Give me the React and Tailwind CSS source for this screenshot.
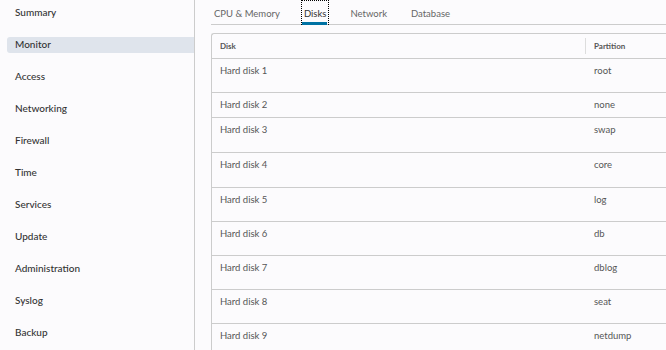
const navItems = [
  "Summary",
  "Monitor",
  "Access",
  "Networking",
  "Firewall",
  "Time",
  "Services",
  "Update",
  "Administration",
  "Syslog",
  "Backup",
];

const tabs = ["CPU & Memory", "Disks", "Network", "Database"];

// row heights include the bottom border
const disks = [
  { name: "Hard disk 1", partition: "root", h: "h-[34px]" },
  { name: "Hard disk 2", partition: "none", h: "h-[25px]" },
  { name: "Hard disk 3", partition: "swap", h: "h-[35px]" },
  { name: "Hard disk 4", partition: "core", h: "h-[35px]" },
  { name: "Hard disk 5", partition: "log", h: "h-[34px]" },
  { name: "Hard disk 6", partition: "db", h: "h-[34px]" },
  { name: "Hard disk 7", partition: "dblog", h: "h-[34px]" },
  { name: "Hard disk 8", partition: "seat", h: "h-[34px]" },
  { name: "Hard disk 9", partition: "netdump", h: "h-[34px]" },
];

function Sidebar() {
  return (
    <div className="w-[195px] shrink-0 border-r border-[#cccccc] flex flex-col gap-4 pt-[5px]">
      {navItems.map((item) =>
        item === "Monitor" ? (
          <div
            key={item}
            className="ml-[7px] h-4 leading-[15px] pl-2 rounded-l-[3px] bg-[#dfe4ec] text-[#333333] text-[10px] font-medium"
          >
            {item}
          </div>
        ) : (
          <div key={item} className="h-4 leading-[15px] pl-[15px] text-[#333333] text-[10px] font-medium">
            {item}
          </div>
        )
      )}
    </div>
  );
}

function Tabs() {
  return (
    <div className="h-[25px] border-b border-[#cccccc] flex gap-[18px] items-start">
      {tabs.map((tab) =>
        tab === "Disks" ? (
          <div
            key={tab}
            className="relative h-[25px] px-[3px] flex flex-col outline-1 outline-dotted outline-black -outline-offset-1"
          >
            <span className="pt-[8px] leading-[12px] text-[9.5px] text-[#333333]">{tab}</span>
            <span className="absolute left-px right-[2px] top-[22px] h-[3px] bg-[#0072a3]" />
          </div>
        ) : (
          <div key={tab} className="h-[25px] px-[3px]">
            <span className="block pt-[8px] leading-[12px] text-[9.5px] text-[#666666]">{tab}</span>
          </div>
        )
      )}
    </div>
  );
}

function DiskTable() {
  return (
    <div className="mt-2 w-[480px] border-l border-t border-[#cccccc] rounded-tl-[3px]">
      <div className="h-[25px] flex items-center border-b border-[#cccccc]">
        <div className="w-[373px] pl-2 text-[8px] font-bold text-[#565656]">Disk</div>
        <div className="h-4 border-l border-[#dddddd]" />
        <div className="pl-2 text-[8px] font-bold text-[#565656]">Partition</div>
      </div>
      {disks.map((d) => (
        <div key={d.name} className={`${d.h} flex border-b border-[#cccccc] text-[9.5px] leading-[12px] text-[#565656]`}>
          <div className="w-[374px] pl-2 pt-[6px]">{d.name}</div>
          <div className="pl-2 pt-[6px]">{d.partition}</div>
        </div>
      ))}
    </div>
  );
}

export default function App() {
  return (
    <div
      className="w-[666px] h-[350px] overflow-hidden flex bg-[#fcfbfd]"
      style={{ fontFamily: "Lato, 'Noto Sans', sans-serif" }}
    >
      <Sidebar />
      <div className="flex-1 pl-4 overflow-hidden">
        <Tabs />
        <DiskTable />
      </div>
    </div>
  );
}
